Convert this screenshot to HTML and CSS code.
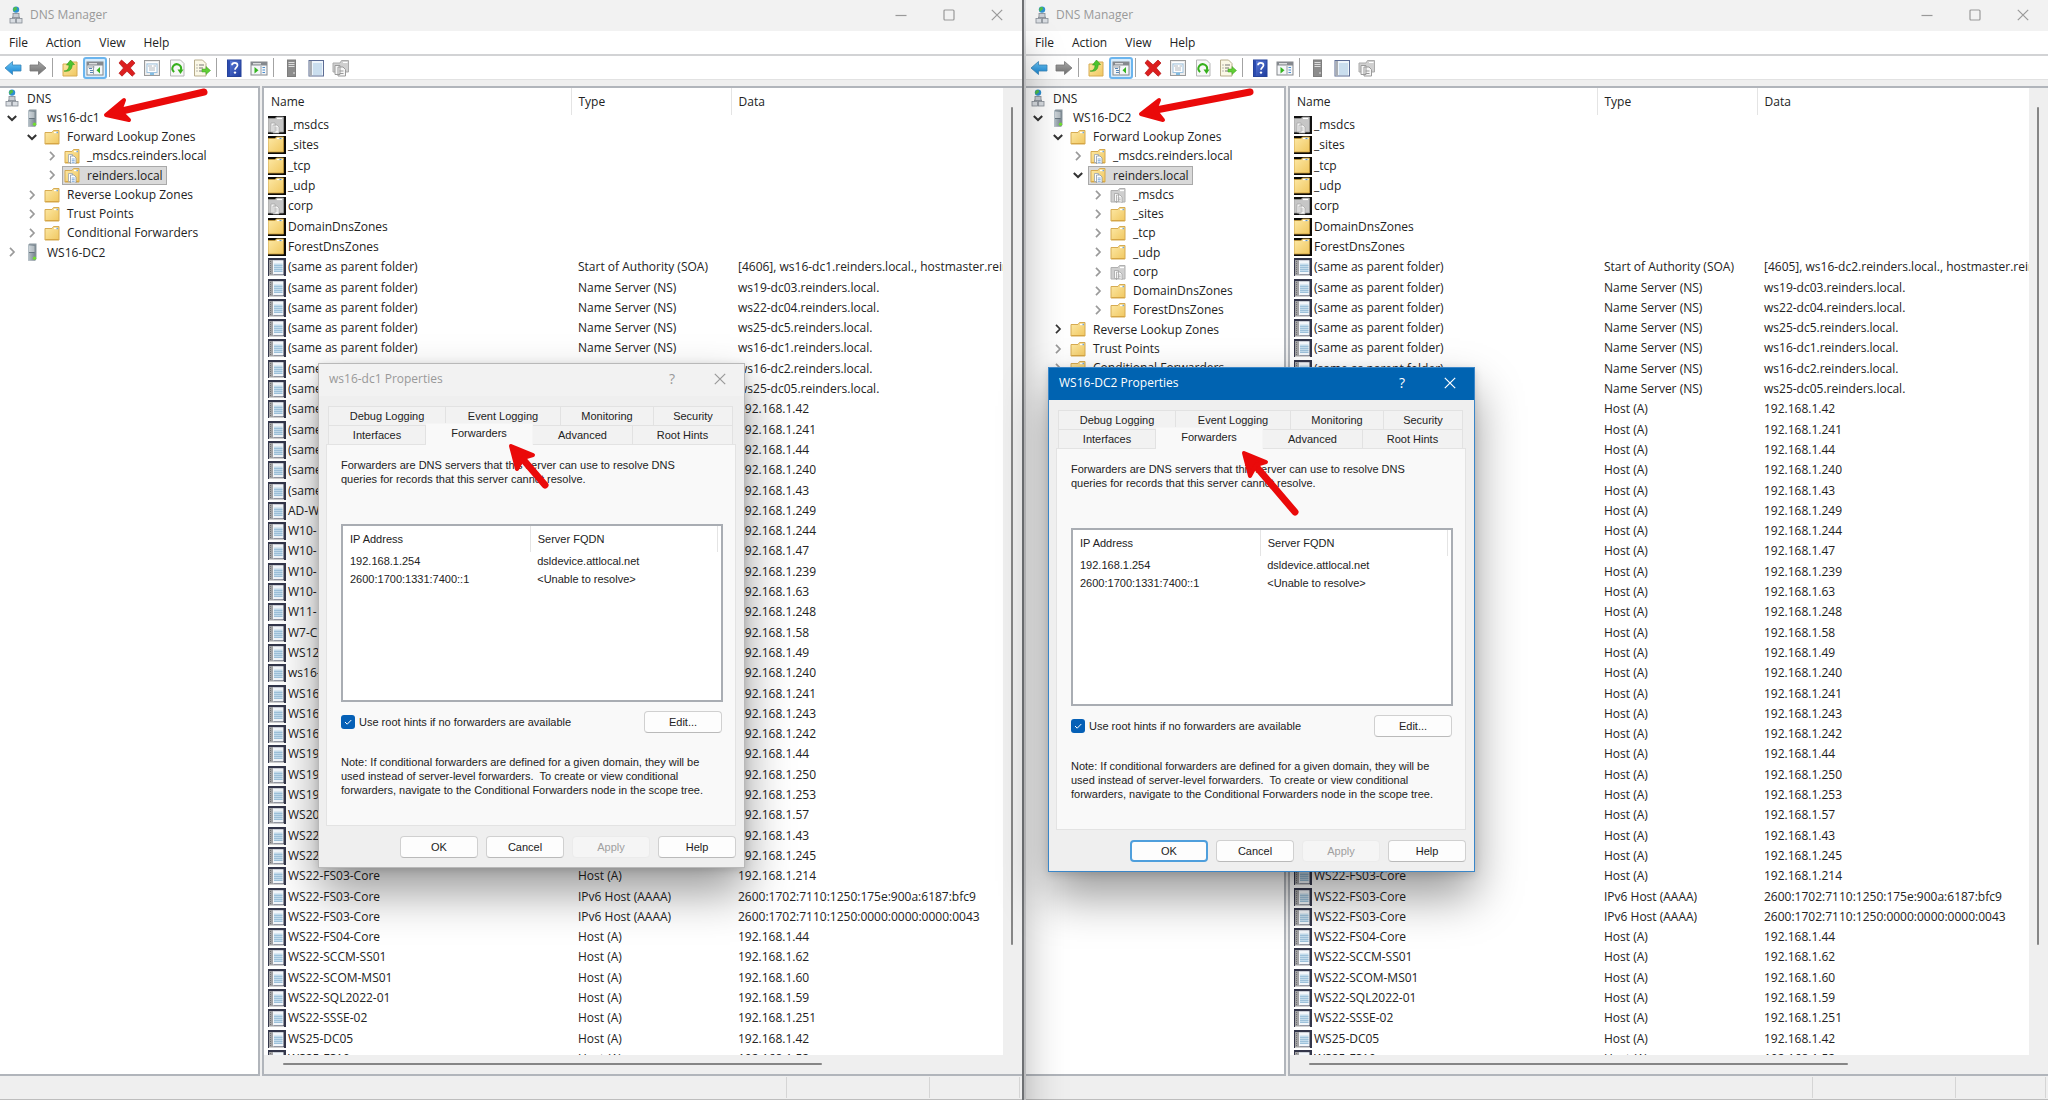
FILE: index.html
```html
<!DOCTYPE html>
<html lang="en">
<head>
<meta charset="utf-8">
<title>DNS Manager</title>
<link rel="stylesheet" href="styles.css">
</head>
<body>
<svg class="sprite" aria-hidden="true">
  <defs>
    <linearGradient id="g-folder" x1="0" y1="0" x2="1" y2="1"><stop offset="0" stop-color="#fde9a6"/><stop offset="1" stop-color="#f0c760"/></linearGradient>
    <linearGradient id="g-blue" x1="0" y1="0" x2="0" y2="1"><stop offset="0" stop-color="#6cc6f5"/><stop offset="1" stop-color="#1583d3"/></linearGradient>
    <linearGradient id="g-gray" x1="0" y1="0" x2="0" y2="1"><stop offset="0" stop-color="#a8a8a8"/><stop offset="1" stop-color="#6f6f6f"/></linearGradient>
    <linearGradient id="g-help" x1="0" y1="0" x2="1" y2="1"><stop offset="0" stop-color="#5f7fdc"/><stop offset="1" stop-color="#1c3a9c"/></linearGradient>
    <linearGradient id="g-tower" x1="0" y1="0" x2="1" y2="0"><stop offset="0" stop-color="#b9c4cb"/><stop offset="1" stop-color="#75828b"/></linearGradient>
    <symbol id="i-dns" viewBox="0 0 16 18">
      <circle cx="8" cy="3.6" r="3.2" fill="#2e8fd0"/><path d="M6 1.5c2-1 3.500 0 3 1.500s-2 1-2.500 2.500C5 5 4.600 3 6 1.500z" fill="#4fbd4a"/>
      <path d="M8 7v3M4.500 12.500V11h7v1.500" fill="none" stroke="#8c939a"/>
      <rect x="5" y="7.500" width="6" height="4" fill="#c9ced4" stroke="#858c95" stroke-width=".8"/>
      <rect x="2" y="12.500" width="5.500" height="4.500" fill="#d9dde2" stroke="#858c95" stroke-width=".8"/>
      <rect x="8.500" y="12.500" width="5.500" height="4.500" fill="#d9dde2" stroke="#858c95" stroke-width=".8"/>
    </symbol>
    <symbol id="i-server" viewBox="0 0 16 18">
      <path d="M4 2l1.500-1.500h7V16L11 17.500H4z" fill="#8b979f"/>
      <rect x="4" y="2" width="7.500" height="15.500" fill="url(#g-tower)"/>
      <path d="M5 4h5.500M5 6h5.500M5 8h5.500" stroke="#eef2f4" stroke-width=".9"/>
      <path d="M5 9.500h5.500" stroke="#5d6a73" stroke-width=".8"/>
      <circle cx="10.500" cy="15.200" r="1.600" fill="#6fe02c"/>
    </symbol>
    <symbol id="i-folder" viewBox="0 0 16 16">
      <path d="M1 3.500h7L9.500 1.500H15V15H1z" fill="url(#g-folder)" stroke="#d6ab52" stroke-width="1"/>
      <path d="M10 3.500h4" stroke="#fff" stroke-width="1.300"/><path d="M12.500 3.500H14" stroke="#73a7d8" stroke-width="1.300"/>
      <path d="M1.500 14.500h13" stroke="#d29f3d" stroke-width=".8"/>
    </symbol>
    <symbol id="i-doc" viewBox="0 0 16 16">
      <path d="M4.500 6.500h4v8h-4z" fill="#fff" stroke="#9aa5b0" stroke-width=".8"/>
      <path d="M6.500 8H10l2 2v6H6.500z" fill="#fff" stroke="#8c98a5" stroke-width=".8"/>
      <path d="M7.700 11h3M7.700 12.700h3M7.700 14.300h3" stroke="#5d93cf" stroke-width=".8"/>
    </symbol>
    <symbol id="i-zone" viewBox="0 0 16 16"><use href="#i-folder"/><use href="#i-doc"/></symbol>
    <symbol id="i-gray" viewBox="0 0 16 16">
      <path d="M1 3.500h7L9.500 1.500H15V15H1z" fill="#cfcfcf" stroke="#b0b0b0"/>
      <path d="M10 3.500h4" stroke="#fff" stroke-width="1.300"/>
      <path d="M4.500 6.500h4v8h-4zM6.500 8H10l2 2v6H6.500z" fill="#fafafa" stroke="#a5a5a5" stroke-width=".8"/>
      <path d="M7.700 11h3M7.700 12.700h3M7.700 14.300h3" stroke="#a8a8a8" stroke-width=".8"/>
    </symbol>
    <symbol id="i-row-folder" viewBox="0 0 18 18">
      <path d="M0 0h18v18H0z" fill="#0c0a06"/><path d="M0 2.500h7L8.500 1H15.500V16H0z" fill="url(#g-folder)" stroke="#c79a3c" stroke-width=".8"/>
      <path d="M9 2.500h5.500" stroke="#fff" stroke-width="1.200"/><path d="M11.500 2.500h2" stroke="#5f97c8" stroke-width="1.200"/>
    </symbol>
    <symbol id="i-row-gray" viewBox="0 0 18 18">
      <path d="M0 0h18v18H0z" fill="#111"/><path d="M0 2.500h7L8.500 1H15.500V16H0z" fill="#c6c6c6" stroke="#9b9b9b" stroke-width=".8"/>
      <path d="M9 2.500h5" stroke="#fff" stroke-width="1.200"/>
      <path d="M3 7h4v9H3zM5 9h4l2 2v6H5z" fill="#f4f4f4" stroke="#a5a5a5" stroke-width=".7"/>
      <path d="M6.500 12h3M6.500 14h3" stroke="#aaa" stroke-width=".8"/>
    </symbol>
    <symbol id="i-row-record" viewBox="0 0 18 18">
      <path d="M0 0h18v18H0z" fill="#33364a"/><path d="M1 2h4.500v15H1z" fill="#a2a2a4"/>
      <path d="M5 2.200h10.500V16.500H5z" fill="#f2f6fa"/><path d="M6 5.500h8.500v8.500H6z" fill="#c4dcec"/>
      <path d="M6 7.500h8.500M6 9.500h8.500M6 11.500h8.500M6 13.500h8.500" stroke="#8db4d2" stroke-width=".7"/>
      <path d="M1 17.500h15" stroke="#d0d0d0"/><path d="M2.500 3v13" stroke="#666" stroke-dasharray="1 1" stroke-width=".8"/>
    </symbol>
    <symbol id="i-back" viewBox="0 0 18 18"><path d="M1 9l7.500-6.500V6H17v6H8.500v3.500z" fill="url(#g-blue)" stroke="#3b86b8" stroke-width=".8"/></symbol>
    <symbol id="i-forward" viewBox="0 0 18 18"><path d="M17 9L9.500 2.500V6H1v6h8.500v3.500z" fill="url(#g-gray)" stroke="#777" stroke-width=".8"/></symbol>
    <symbol id="i-up" viewBox="0 0 18 18"><path d="M2 5h6l1.500-2H16v14H2z" fill="url(#g-folder)" stroke="#d6ab52"/><path d="M3 12c3 0 5-2 5-6H5.500L9.500 1l4 4.500-2.300.3C11 11 8 13 3 12z" fill="#4cc42e" stroke="#2f9a1b" stroke-width=".6"/></symbol>
    <symbol id="i-tree" viewBox="0 0 18 18"><rect x="1" y="3" width="16" height="13" fill="#f4f6f8" stroke="#85888c"/><path d="M1 3h16v3.500H1z" fill="#85898e"/><path d="M3 4.800h8" stroke="#fff"/><path d="M2 8h6.500M7.500 7v8.500" stroke="#9aa0a6"/><path d="M3 9.500h3M4 11.500h3M4 13.500h3" stroke="#5a87b5"/><path d="M14 8v6.500L10.500 11.200z" fill="#34b41f"/></symbol>
    <symbol id="i-delete" viewBox="0 0 18 18"><path d="M3.500 1L9 5.800 14 1l3 3-4.700 5 4.700 5.500-2.800 2.700L9 12.200l-5 5-3-3L5.500 9 1 4z" fill="#dc1f1f" stroke="#b51414" stroke-width=".7"/></symbol>
    <symbol id="i-props" viewBox="0 0 18 18"><rect x="1.500" y="1.500" width="15" height="15" fill="#ececec" stroke="#9a9a9a"/><path d="M3 3.500h12" stroke="#fff"/><rect x="4" y="5" width="10" height="8.500" fill="#fff" stroke="#9fc3df"/><path d="M5 7h4M10.500 7H13M6 9h6M6 11h6" stroke="#b0b6bc"/><path d="M7 15h4" stroke="#4ba3dc" stroke-width="1.300"/></symbol>
    <symbol id="i-refresh" viewBox="0 0 18 18"><path d="M2.500 1h10L16 4.500V17H2.500z" fill="#f8f8f8" stroke="#b5b5b5"/><path d="M6.200 13A4.300 4.300 0 1 1 12.800 11" fill="none" stroke="#36b01c" stroke-width="2"/><path d="M9.500 10.500h6L12.500 15z" fill="#36b01c"/></symbol>
    <symbol id="i-export" viewBox="0 0 18 18"><path d="M1.500 1h8L13 4.500V17H1.500z" fill="#fbf8e6" stroke="#b7ad8c"/><path d="M3.500 6h1M3.500 9h1M3.500 12h1M6 6h5M6 9h4M6 12h4" stroke="#777"/><path d="M9 10h4V7.500l4.500 4-4.500 4V13H9z" fill="#62cf35" stroke="#3d9c22" stroke-width=".5"/></symbol>
    <symbol id="i-help" viewBox="0 0 18 18"><rect x="2.500" y="1" width="13.500" height="16.500" fill="url(#g-help)" stroke="#26439a"/><path d="M3 1.500h2v15.500H3z" fill="#2b4bb0"/><path d="M7 6.200c0-3.200 5.500-3.200 5.500 0 0 2-2.500 2.200-2.500 4.600" fill="none" stroke="#fff" stroke-width="1.700"/><circle cx="10" cy="13.600" r="1.200" fill="#fff"/></symbol>
    <symbol id="i-action" viewBox="0 0 18 18"><rect x="1" y="3" width="16" height="13" fill="#f4f6f8" stroke="#85888c"/><path d="M1 3h16v3.500H1z" fill="#85898e"/><path d="M3 4.800h8" stroke="#fff"/><path d="M11 7v8.500" stroke="#9aa0a6"/><path d="M12.500 8.500H15M12.500 11H15M12.500 13.500H15" stroke="#4a8ed0"/><path d="M4.500 8v6.500L8.500 11.200z" fill="#34b41f"/></symbol>
    <symbol id="i-tower" viewBox="0 0 18 18"><rect x="5.500" y="1" width="8" height="16.500" fill="#8c8c8c" stroke="#7d7d7d"/><path d="M6.500 3.500h6M6.500 5.500h6M6.500 7.500h6" stroke="#ddd"/><path d="M11.500 14h1" stroke="#fff" stroke-width="1.500"/></symbol>
    <symbol id="i-notebook" viewBox="0 0 18 18"><rect x="2" y="1.500" width="14.500" height="15.500" fill="#eef5fb" stroke="#5c6c94"/><path d="M2.500 2h2.500v15H2.500z" fill="#a9adb3"/><path d="M6 5h9M6 7h9M6 9h9M6 11h9M6 13h9M6 15h9" stroke="#9dc3df" stroke-width=".9"/></symbol>
    <symbol id="i-copy" viewBox="0 0 18 18"><path d="M1 4h7l1.500-2.500H16.500V13H1z" fill="#d0d0d0" stroke="#ababab"/><path d="M11 3.500h4.500" stroke="#fff"/><path d="M3 6.500h5v9H3zM6 8h5l2.500 2.500v6.500H6z" fill="#f6f6f6" stroke="#9a9a9a"/><path d="M7.500 12h4M7.500 14.500h4" stroke="#999"/></symbol>
    <symbol id="i-chev" viewBox="0 0 12 12"><path d="M4 1.800L8 6 4 10.200" fill="none" stroke="currentColor" stroke-width="1.700"/></symbol>
    <symbol id="i-chev-down" viewBox="0 0 12 12"><path d="M1.800 4L6 8l4.200-4" fill="none" stroke="currentColor" stroke-width="2"/></symbol>
    <symbol id="i-min" viewBox="0 0 12 12"><path d="M.5 6.500h11" stroke="currentColor" stroke-width="1.200"/></symbol>
    <symbol id="i-max" viewBox="0 0 12 12"><rect x="1" y="1" width="10" height="10" rx="1" fill="none" stroke="currentColor" stroke-width="1.200"/></symbol>
    <symbol id="i-close" viewBox="0 0 12 12"><path d="M.8.800l10.400 10.400M11.200.8L.8 11.200" stroke="currentColor" stroke-width="1.200"/></symbol>
  </defs>
</svg>

<div class="desktop">
  <main class="window window-left">
    <header class="titlebar">
      <svg class="app-icon"><use href="#i-dns"/></svg><h1>DNS Manager</h1>
      <div class="controls">
        <button aria-label="Minimize"><svg><use href="#i-min"/></svg></button>
        <button aria-label="Maximize"><svg><use href="#i-max"/></svg></button>
        <button aria-label="Close"><svg><use href="#i-close"/></svg></button>
      </div>
    </header>
    <nav class="menu"><button>File</button><button>Action</button><button>View</button><button>Help</button></nav>
    <div class="toolbar" role="toolbar" aria-label="Standard">
      <button aria-label="Back"><svg><use href="#i-back"/></svg></button>
      <button aria-label="Forward"><svg><use href="#i-forward"/></svg></button>
      <span class="sep"></span>
      <button aria-label="Up one level"><svg><use href="#i-up"/></svg></button>
      <button class="pressed" aria-label="Show console tree" aria-pressed="true"><svg><use href="#i-tree"/></svg></button>
      <span class="sep"></span>
      <button aria-label="Delete"><svg><use href="#i-delete"/></svg></button>
      <button aria-label="Properties"><svg><use href="#i-props"/></svg></button>
      <button aria-label="Refresh"><svg><use href="#i-refresh"/></svg></button>
      <button aria-label="Export list"><svg><use href="#i-export"/></svg></button>
      <span class="sep"></span>
      <button aria-label="Help"><svg><use href="#i-help"/></svg></button>
      <button aria-label="Show action pane"><svg><use href="#i-action"/></svg></button>
      <span class="sep"></span>
      <button aria-label="Server"><svg><use href="#i-tower"/></svg></button>
      <button aria-label="New record"><svg><use href="#i-notebook"/></svg></button>
      <button aria-label="New zone"><svg><use href="#i-copy"/></svg></button>
    </div>
    <div class="panes">
      <ul class="tree">
        <li class="root"><span class="node"><svg class="tall"><use href="#i-dns"/></svg>DNS</span></li>
        <li class="l1 open"><button aria-label="Collapse"><svg><use href="#i-chev-down"/></svg></button><span class="node"><svg class="tall"><use href="#i-server"/></svg>ws16-dc1</span></li>
        <li class="l2 open"><button aria-label="Collapse"><svg><use href="#i-chev-down"/></svg></button><span class="node"><svg><use href="#i-folder"/></svg>Forward Lookup Zones</span></li>
        <li class="l3"><button aria-label="Expand"><svg><use href="#i-chev"/></svg></button><span class="node"><svg><use href="#i-zone"/></svg>_msdcs.reinders.local</span></li>
        <li class="l3"><button aria-label="Expand"><svg><use href="#i-chev"/></svg></button><span class="node selected"><svg><use href="#i-zone"/></svg>reinders.local</span></li>
        <li class="l2"><button aria-label="Expand"><svg><use href="#i-chev"/></svg></button><span class="node"><svg><use href="#i-folder"/></svg>Reverse Lookup Zones</span></li>
        <li class="l2"><button aria-label="Expand"><svg><use href="#i-chev"/></svg></button><span class="node"><svg><use href="#i-folder"/></svg>Trust Points</span></li>
        <li class="l2"><button aria-label="Expand"><svg><use href="#i-chev"/></svg></button><span class="node"><svg><use href="#i-folder"/></svg>Conditional Forwarders</span></li>
        <li class="l1"><button aria-label="Expand"><svg><use href="#i-chev"/></svg></button><span class="node"><svg class="tall"><use href="#i-server"/></svg>WS16-DC2</span></li>
      </ul>
      <section class="records">
        <div class="list">
          <table>
            <colgroup><col class="c-name"><col class="c-type"><col></colgroup>
            <thead><tr><th>Name</th><th>Type</th><th>Data</th></tr></thead>
            <tbody data-soa="[4606], ws16-dc1.reinders.local., hostmaster.reinders.local."></tbody>
          </table>
        </div>
        <div class="vscroll"><span></span></div>
        <div class="hscroll"><span></span></div>
      </section>
    </div>
    <footer class="status"><span></span><span></span><span></span></footer>
  </main>

  <main class="window window-right">
    <header class="titlebar">
      <svg class="app-icon"><use href="#i-dns"/></svg><h1>DNS Manager</h1>
      <div class="controls">
        <button aria-label="Minimize"><svg><use href="#i-min"/></svg></button>
        <button aria-label="Maximize"><svg><use href="#i-max"/></svg></button>
        <button aria-label="Close"><svg><use href="#i-close"/></svg></button>
      </div>
    </header>
    <nav class="menu"><button>File</button><button>Action</button><button>View</button><button>Help</button></nav>
    <div class="toolbar" role="toolbar" aria-label="Standard">
      <button aria-label="Back"><svg><use href="#i-back"/></svg></button>
      <button aria-label="Forward"><svg><use href="#i-forward"/></svg></button>
      <span class="sep"></span>
      <button aria-label="Up one level"><svg><use href="#i-up"/></svg></button>
      <button class="pressed" aria-label="Show console tree" aria-pressed="true"><svg><use href="#i-tree"/></svg></button>
      <span class="sep"></span>
      <button aria-label="Delete"><svg><use href="#i-delete"/></svg></button>
      <button aria-label="Properties"><svg><use href="#i-props"/></svg></button>
      <button aria-label="Refresh"><svg><use href="#i-refresh"/></svg></button>
      <button aria-label="Export list"><svg><use href="#i-export"/></svg></button>
      <span class="sep"></span>
      <button aria-label="Help"><svg><use href="#i-help"/></svg></button>
      <button aria-label="Show action pane"><svg><use href="#i-action"/></svg></button>
      <span class="sep"></span>
      <button aria-label="Server"><svg><use href="#i-tower"/></svg></button>
      <button aria-label="New record"><svg><use href="#i-notebook"/></svg></button>
      <button aria-label="New zone"><svg><use href="#i-copy"/></svg></button>
    </div>
    <div class="panes">
      <ul class="tree">
        <li class="root"><span class="node"><svg class="tall"><use href="#i-dns"/></svg>DNS</span></li>
        <li class="l1 open"><button aria-label="Collapse"><svg><use href="#i-chev-down"/></svg></button><span class="node"><svg class="tall"><use href="#i-server"/></svg>WS16-DC2</span></li>
        <li class="l2 open"><button aria-label="Collapse"><svg><use href="#i-chev-down"/></svg></button><span class="node"><svg><use href="#i-folder"/></svg>Forward Lookup Zones</span></li>
        <li class="l3"><button aria-label="Expand"><svg><use href="#i-chev"/></svg></button><span class="node"><svg><use href="#i-zone"/></svg>_msdcs.reinders.local</span></li>
        <li class="l3 open"><button aria-label="Collapse"><svg><use href="#i-chev-down"/></svg></button><span class="node selected"><svg><use href="#i-zone"/></svg>reinders.local</span></li>
        <li class="l4"><button aria-label="Expand"><svg><use href="#i-chev"/></svg></button><span class="node"><svg><use href="#i-gray"/></svg>_msdcs</span></li>
        <li class="l4"><button aria-label="Expand"><svg><use href="#i-chev"/></svg></button><span class="node"><svg><use href="#i-folder"/></svg>_sites</span></li>
        <li class="l4"><button aria-label="Expand"><svg><use href="#i-chev"/></svg></button><span class="node"><svg><use href="#i-folder"/></svg>_tcp</span></li>
        <li class="l4"><button aria-label="Expand"><svg><use href="#i-chev"/></svg></button><span class="node"><svg><use href="#i-folder"/></svg>_udp</span></li>
        <li class="l4"><button aria-label="Expand"><svg><use href="#i-chev"/></svg></button><span class="node"><svg><use href="#i-gray"/></svg>corp</span></li>
        <li class="l4"><button aria-label="Expand"><svg><use href="#i-chev"/></svg></button><span class="node"><svg><use href="#i-folder"/></svg>DomainDnsZones</span></li>
        <li class="l4"><button aria-label="Expand"><svg><use href="#i-chev"/></svg></button><span class="node"><svg><use href="#i-folder"/></svg>ForestDnsZones</span></li>
        <li class="l2 open"><button aria-label="Expand"><svg><use href="#i-chev"/></svg></button><span class="node"><svg><use href="#i-folder"/></svg>Reverse Lookup Zones</span></li>
        <li class="l2"><button aria-label="Expand"><svg><use href="#i-chev"/></svg></button><span class="node"><svg><use href="#i-folder"/></svg>Trust Points</span></li>
        <li class="l2"><button aria-label="Expand"><svg><use href="#i-chev"/></svg></button><span class="node"><svg><use href="#i-folder"/></svg>Conditional Forwarders</span></li>
      </ul>
      <section class="records">
        <div class="list">
          <table>
            <colgroup><col class="c-name"><col class="c-type"><col></colgroup>
            <thead><tr><th>Name</th><th>Type</th><th>Data</th></tr></thead>
            <tbody data-soa="[4605], ws16-dc2.reinders.local., hostmaster.reinders.local."></tbody>
          </table>
        </div>
        <div class="vscroll"><span></span></div>
        <div class="hscroll"><span></span></div>
      </section>
    </div>
    <footer class="status"><span></span><span></span><span></span></footer>
  </main>

  <section class="dialog dialog-dc1" role="dialog" aria-label="ws16-dc1 Properties">
    <header><h2>ws16-dc1 Properties</h2><button aria-label="Context help">?</button><button aria-label="Close"><svg><use href="#i-close"/></svg></button></header>
    <div class="tabs back" role="tablist"><button role="tab">Debug Logging</button><button role="tab">Event Logging</button><button role="tab">Monitoring</button><button role="tab">Security</button></div>
    <div class="tabs front" role="tablist"><button role="tab">Interfaces</button><button role="tab" class="active" aria-selected="true">Forwarders</button><button role="tab">Advanced</button><button role="tab">Root Hints</button></div>
    <div class="panel" role="tabpanel">
      <p>Forwarders are DNS servers that this server can use to resolve DNS<br>queries for records that this server cannot resolve.</p>
      <div class="forwarders">
        <table>
          <thead><tr><th>IP Address</th><th>Server FQDN</th></tr></thead>
          <tbody><tr><td>192.168.1.254</td><td>dsldevice.attlocal.net</td></tr><tr><td>2600:1700:1331:7400::1</td><td>&lt;Unable to resolve&gt;</td></tr></tbody>
        </table>
      </div>
      <div class="option"><label><input type="checkbox" checked>Use root hints if no forwarders are available</label><button class="push">Edit...</button></div>
      <p>Note: If conditional forwarders are defined for a given domain, they will be<br>used instead of server-level forwarders.&nbsp; To create or view conditional<br>forwarders, navigate to the Conditional Forwarders node in the scope tree.</p>
    </div>
    <div class="actions"><button class="push">OK</button><button class="push">Cancel</button><button class="push" disabled>Apply</button><button class="push">Help</button></div>
  </section>

  <section class="dialog dialog-dc2" role="dialog" aria-label="WS16-DC2 Properties">
    <header><h2>WS16-DC2 Properties</h2><button aria-label="Context help">?</button><button aria-label="Close"><svg><use href="#i-close"/></svg></button></header>
    <div class="tabs back" role="tablist"><button role="tab">Debug Logging</button><button role="tab">Event Logging</button><button role="tab">Monitoring</button><button role="tab">Security</button></div>
    <div class="tabs front" role="tablist"><button role="tab">Interfaces</button><button role="tab" class="active" aria-selected="true">Forwarders</button><button role="tab">Advanced</button><button role="tab">Root Hints</button></div>
    <div class="panel" role="tabpanel">
      <p>Forwarders are DNS servers that this server can use to resolve DNS<br>queries for records that this server cannot resolve.</p>
      <div class="forwarders">
        <table>
          <thead><tr><th>IP Address</th><th>Server FQDN</th></tr></thead>
          <tbody><tr><td>192.168.1.254</td><td>dsldevice.attlocal.net</td></tr><tr><td>2600:1700:1331:7400::1</td><td>&lt;Unable to resolve&gt;</td></tr></tbody>
        </table>
      </div>
      <div class="option"><label><input type="checkbox" checked>Use root hints if no forwarders are available</label><button class="push">Edit...</button></div>
      <p>Note: If conditional forwarders are defined for a given domain, they will be<br>used instead of server-level forwarders.&nbsp; To create or view conditional<br>forwarders, navigate to the Conditional Forwarders node in the scope tree.</p>
    </div>
    <div class="actions"><button class="push default">OK</button><button class="push">Cancel</button><button class="push" disabled>Apply</button><button class="push">Help</button></div>
  </section>

  <svg class="arrows" aria-hidden="true">
    <g><path class="shaft" d="M204 92L122 111"/><path class="head" d="M106 115l18-15-4 11 9 9z"/></g>
    <g><path class="shaft" d="M1250 92L1156 110"/><path class="head" d="M1141 114l18-14-4 10 8 10z"/></g>
    <g><path class="shaft" d="M545 485L521 457"/><path class="head" d="M511 446l22 9-10 3-6 11z"/></g>
    <g><path class="shaft" d="M1295 512L1254 464"/><path class="head" d="M1244 453l22 9-10 3-6 11z"/></g>
  </svg>
</div>
<script src="records.js"></script>
</body>
</html>
```
FILE: records.js
```js
const same = '(same as parent folder)';
const ns = 'Name Server (NS)';
const host = 'Host (A)';
const ipv6 = 'IPv6 Host (AAAA)';

const folders = [
  ['gray', '_msdcs'], ['folder', '_sites'], ['folder', '_tcp'], ['folder', '_udp'],
  ['gray', 'corp'], ['folder', 'DomainDnsZones'], ['folder', 'ForestDnsZones'],
];

const records = [
  [same, ns, 'ws19-dc03.reinders.local.'],
  [same, ns, 'ws22-dc04.reinders.local.'],
  [same, ns, 'ws25-dc5.reinders.local.'],
  [same, ns, 'ws16-dc1.reinders.local.'],
  [same, ns, 'ws16-dc2.reinders.local.'],
  [same, ns, 'ws25-dc05.reinders.local.'],
  [same, host, '192.168.1.42'],
  [same, host, '192.168.1.241'],
  [same, host, '192.168.1.44'],
  [same, host, '192.168.1.240'],
  [same, host, '192.168.1.43'],
  ['AD-W', host, '192.168.1.249'],
  ['W10-', host, '192.168.1.244'],
  ['W10-', host, '192.168.1.47'],
  ['W10-', host, '192.168.1.239'],
  ['W10-', host, '192.168.1.63'],
  ['W11-', host, '192.168.1.248'],
  ['W7-C', host, '192.168.1.58'],
  ['WS12', host, '192.168.1.49'],
  ['ws16-', host, '192.168.1.240'],
  ['WS16', host, '192.168.1.241'],
  ['WS16', host, '192.168.1.243'],
  ['WS16', host, '192.168.1.242'],
  ['WS19', host, '192.168.1.44'],
  ['WS19', host, '192.168.1.250'],
  ['WS19', host, '192.168.1.253'],
  ['WS20', host, '192.168.1.57'],
  ['WS22', host, '192.168.1.43'],
  ['WS22', host, '192.168.1.245'],
  ['WS22-FS03-Core', host, '192.168.1.214'],
  ['WS22-FS03-Core', ipv6, '2600:1702:7110:1250:175e:900a:6187:bfc9'],
  ['WS22-FS03-Core', ipv6, '2600:1702:7110:1250:0000:0000:0000:0043'],
  ['WS22-FS04-Core', host, '192.168.1.44'],
  ['WS22-SCCM-SS01', host, '192.168.1.62'],
  ['WS22-SCOM-MS01', host, '192.168.1.60'],
  ['WS22-SQL2022-01', host, '192.168.1.59'],
  ['WS22-SSSE-02', host, '192.168.1.251'],
  ['WS25-DC05', host, '192.168.1.42'],
  ['WS25-FS10', host, '192.168.1.52'],
];

const row = (icon, name, type, data) => `<tr>
  <td><span class="name"><svg><use href="#i-row-${icon}"/></svg>${name}</span></td><td>${type}</td><td>${data}</td></tr>`;

document.querySelectorAll('tbody[data-soa]').forEach((body) => {
  body.innerHTML = [
    ...folders.map(([icon, name]) => row(icon, name, '', '')),
    row('record', same, 'Start of Authority (SOA)', body.dataset.soa),
    ...records.map(([name, type, data]) => row('record', name, type, data)),
  ].join('');
});
```
FILE: styles.css
```css
* { box-sizing: border-box; }

body {
  margin: 0;
  font-family: "Open Sans", "Noto Sans", sans-serif;
  font-size: 12px;
  color: #222;
}

h1, h2, p, ul { margin: 0; padding: 0; font-weight: 400; }
button { margin: 0; padding: 0; border: 0; background: none; font: inherit; color: inherit; }
svg { display: block; flex: none; }
.sprite { position: absolute; width: 0; height: 0; }

.desktop {
  position: relative;
  display: grid;
  grid-template-columns: 1fr 1fr;
  height: 100vh;
  overflow: hidden;
}

.window { display: flex; flex-direction: column; min-width: 0; min-height: 0; background: #efefef; }
.window-left { position: relative; z-index: 1; border-right: 2px solid #6e7073; box-shadow: 0 48px 40px rgba(0, 0, 0, .3); }
.window-right { border-left: 2px solid #dcdddf; }

.titlebar { display: flex; align-items: center; height: 31px; padding: 0 1px 2px 8px; background: #f2f2f2; color: #999; }
.titlebar h1 { margin-left: 6px; font-size: 12px; }
.app-icon { width: 16px; height: 18px; }
.controls { display: flex; margin-left: auto; }
.controls button { display: grid; place-items: center; width: 48px; height: 28px; }
.controls svg { width: 12px; height: 12px; }

.menu { display: flex; gap: 18px; height: 25px; padding: 0 9px; background: #fff; border-bottom: 2px solid #d2d3d5; }

.toolbar { display: flex; align-items: center; gap: 1px; height: 24px; padding-left: 1px; background: #fff; border-bottom: 1px solid #e2e2e2; }
.toolbar button { display: grid; place-items: center; width: 24px; height: 22px; }
.toolbar .pressed { border: 2px solid #6bb5ee; border-radius: 3px; background: #d9ecfb; }
.toolbar svg { width: 18px; height: 18px; }
.sep { width: 1px; height: 19px; margin: 0 4px 0 1px; background: #a3a3a3; }

.panes { display: grid; grid-template-columns: 260px 1fr; gap: 2px; flex: 1; min-height: 0; margin-top: 6px; }

.tree { list-style: none; background: #fff; border: 2px solid #b1b5bb; border-left: 0; overflow: hidden; }
.tree li { display: flex; align-items: center; height: 19px; padding-left: 2px; white-space: nowrap; }
.tree li:nth-child(4n+1) { height: 20px; }
.tree .l2 { padding-left: 22px; }
.tree .l3 { padding-left: 42px; }
.tree .l4 { padding-left: 62px; }
.tree button { display: grid; place-items: center; width: 20px; height: 19px; color: #9a9a9a; }
.tree .open button { color: #333; }
.tree button svg { width: 12px; height: 12px; }
.node { display: flex; align-items: center; gap: 7px; height: 19px; padding: 0 4px 0 2px; }
.node svg { width: 16px; height: 16px; }
.node .tall { height: 18px; }
.selected { background: #d9d9d9; outline: 1px solid #a9a9a9; outline-offset: -1px; }

.records {
  display: grid;
  grid-template-columns: 1fr 19px;
  grid-template-rows: 1fr 19px;
  min-width: 0;
  min-height: 0;
  border: 2px solid #b1b5bb;
  border-right: 0;
}
.list { overflow: hidden; background: #fff; }
.list table { width: 100%; table-layout: fixed; border-collapse: collapse; white-space: nowrap; }
.c-name { width: 307px; }
.c-type { width: 160px; }
.list th { height: 27px; padding: 0 7px; border-right: 1px solid #e4e4e4; font-weight: 400; text-align: left; }
.list th:last-child { border-right: 0; }
.list tbody tr { height: 20px; }
.list tbody tr:nth-child(10n+3), .list tbody tr:nth-child(10n+6), .list tbody tr:nth-child(10n+9) { height: 21px; }
.list td { padding: 0 0 0 7px; line-height: 18px; overflow: hidden; }
.list td:first-child { padding-left: 4px; }
.name { display: flex; align-items: center; gap: 2px; }
.name svg { width: 18px; height: 18px; }

.vscroll { display: flex; justify-content: center; padding: 19px 1px 110px 0; }
.vscroll span { width: 2px; border-radius: 1px; background: #868686; }
.hscroll { display: flex; align-items: center; padding: 0 181px 2px 19px; }
.hscroll span { flex: 1; height: 2px; border-radius: 1px; background: #868686; }

.status { display: grid; grid-template-columns: 1fr 143px 90px; height: 24px; padding: 1px 2px 1px 0; border-bottom: 1px solid #bdbdbd; }
.status span { border-right: 1px solid #d5d5d5; }

.dialog {
  position: absolute;
  z-index: 2;
  width: 427px;
  padding: 0 8px 9px 7px;
  border: 1px solid #b9b9b9;
  background: #efefef;
  font-family: "Liberation Sans", Arial, sans-serif;
  font-size: 11px;
  line-height: 14px;
  box-shadow: 0 24px 44px rgba(0, 0, 0, .4), 0 2px 8px rgba(0, 0, 0, .15);
}
.dialog-dc1 { left: 318px; top: 363px; }
.dialog-dc2 { left: 1048px; top: 367px; border-color: #3a86c8; }
.dialog header { display: flex; align-items: center; height: 32px; margin: 0 -8px 10px -7px; padding: 0 0 2px 10px; background: #f2f2f2; color: #999; font-family: "Open Sans", "Noto Sans", sans-serif; }
.dialog-dc2 header { background: #0063b1; color: #fff; }
.dialog h2 { flex: 1; font-size: 12px; }
.dialog header button { display: grid; place-items: center; width: 48px; height: 30px; font-size: 14px; }
.dialog header svg { width: 12px; height: 12px; }

.tabs { display: grid; height: 19px; margin: 0 3px 0 2px; }
.back { grid-template-columns: 118px 115px 93px 79px; }
.front { grid-template-columns: 98px 107px 100px 100px; }
.tabs button { border: 1px solid #e2e2e2; border-left-width: 0; border-bottom-width: 0; background: #f2f2f2; }
.tabs button:first-child { border-left-width: 1px; }
.tabs .active { position: relative; margin: -2px 0 -1px; padding-bottom: 3px; border-color: #f5f5f5; background: #f9f9f9; }

.panel { padding: 13px 12px 28px 14px; border: 1px solid #e3e3e3; background: #f9f9f9; }
.panel p { white-space: nowrap; }
.forwarders { height: 178px; margin: 38px 0 9px; padding: 0 3px 0 0; border: 2px solid #a9adb3; background: #fff; }
.forwarders table { width: 100%; table-layout: fixed; border-collapse: collapse; }
.forwarders th { height: 26px; padding: 0 7px; border-right: 1px solid #e4e4e4; font-weight: 400; text-align: left; }
.forwarders td { height: 18px; padding: 0 7px; }
.option { display: flex; align-items: center; justify-content: space-between; margin-bottom: 22px; padding-right: 1px; }
.option label { display: flex; align-items: center; gap: 4px; }
.option input {
  appearance: none;
  width: 14px;
  height: 14px;
  margin: 0;
  border-radius: 3px;
  background: #0560b6 url('data:image/svg+xml,<svg xmlns="http://www.w3.org/2000/svg" viewBox="0 0 14 14"><path d="M4 7l2.200 2.200L10.300 5" fill="none" stroke="white" stroke-width="1"/></svg>');
}
.push { width: 78px; height: 22px; border: 1px solid #d0d0d0; border-bottom-color: #bababa; border-radius: 4px; background: #fdfdfd; }
.push:disabled { border-color: #ebebeb; background: #f5f5f5; color: #a0a0a0; }
.push.default { border: 2px solid #4f9fdc; }
.actions { display: flex; justify-content: flex-end; gap: 8px; margin-top: 10px; }

.arrows { position: absolute; z-index: 3; inset: 0; width: 100%; height: 100%; pointer-events: none; }
.shaft { fill: none; stroke: #ea0a0a; stroke-width: 7; stroke-linecap: round; }
.head { fill: #ea0a0a; stroke: #ea0a0a; stroke-width: 4; stroke-linejoin: round; }
```
